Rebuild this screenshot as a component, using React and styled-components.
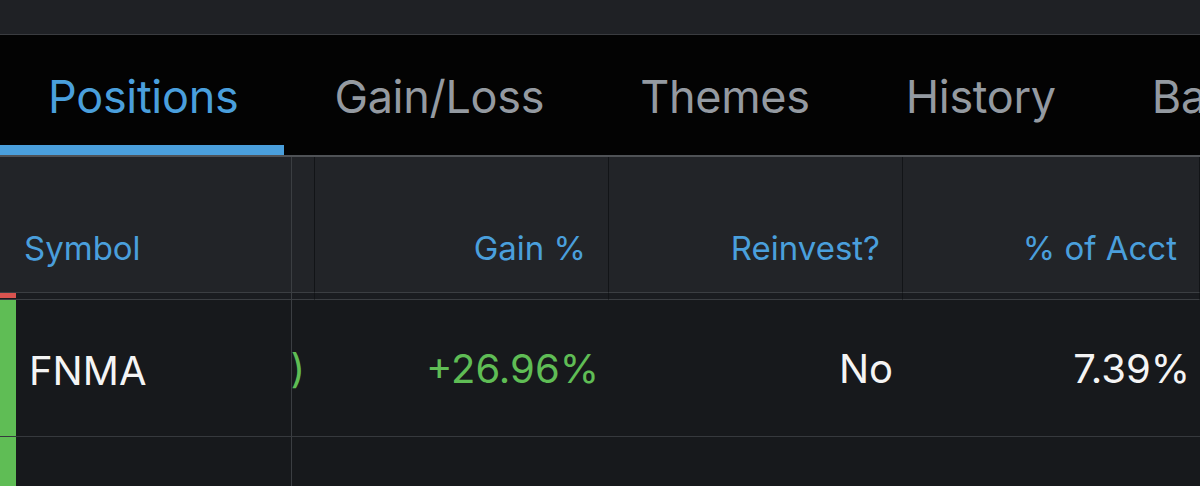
import React from 'react';
import styled, { createGlobalStyle } from 'styled-components';

const GlobalStyle = createGlobalStyle`
    html, body {
        margin: 0;
        padding: 0;
        background: #17191c;
        font-family: Inter, "Noto Sans", sans-serif;
        overflow: hidden;
    }
`

const Page = styled.div`
    width: 1200px;
    height: 486px;
    overflow: hidden;
    background: #17191c;
`

const TopBar = styled.div`
    height: 34px;
    background: #1f2125;
    border-bottom: 1px solid #3a3c40;
`

const TabBar = styled.div`
    display: flex;
    height: 120px;
    background: #030303;
    border-bottom: 2px solid #4f5256;
    white-space: nowrap;
`

const Tab = styled.div`
    position: relative;
    flex-shrink: 0;
    display: flex;
    align-items: center;
    padding: 2px 48px 0;
    font-size: 45px;
    letter-spacing: -0.3px;
    color: ${p => (p.$active ? '#4a9fdc' : '#949aa1')};
    &::after {
        content: '';
        display: ${p => (p.$active ? 'block' : 'none')};
        position: absolute;
        left: 0;
        right: 2px;
        bottom: 0;
        height: 10px;
        background: #4a9fdc;
    }
`

const Grid = styled.div`
    display: grid;
    grid-template-columns: 292px 23px 294px 294px 1fr;
`

const HeadCell = styled.div`
    height: 136px;
    box-sizing: border-box;
    display: flex;
    align-items: flex-end;
    justify-content: ${p => (p.$left ? 'flex-start' : 'flex-end')};
    padding: 0 22px 24px ${p => (p.$left ? '24px' : '0')};
    background: #222428;
    border-bottom: 1px solid #3b3e42;
    border-right: 1px solid ${p => (p.$frozen ? '#3b3e42' : '#121417')};
    font-size: 33px;
    color: #4a9fdc;
    white-space: nowrap;
`

const GapCell = styled.div`
    height: 6px;
    background: #1a1c20;
    border-bottom: 1px solid #3b3e42;
    border-right: 1px solid ${p => (p.$frozen ? '#3b3e42' : '#121417')};
    display: flex;
`

const Marker = styled.div`
    width: 16px;
    height: ${p => p.$h || '100%'};
    background: ${p => p.$color};
    flex-shrink: 0;
`

const Cell = styled.div`
    height: 137px;
    box-sizing: border-box;
    display: flex;
    align-items: center;
    justify-content: ${p => (p.$left ? 'flex-start' : 'flex-end')};
    padding-right: ${p => (p.$left ? '0' : '10px')};
    background: #17191c;
    border-bottom: 1px solid #36393d;
    border-right: ${p => (p.$frozen ? '1px solid #3b3e42' : 'none')};
    font-size: 40px;
    color: ${p => p.$color || '#f4f4f4'};
    white-space: nowrap;
    overflow: hidden;
`

const Symbol = styled.span`
    padding-left: 13px;
    padding-top: 4px;
`

const tabs = ['Positions', 'Gain/Loss', 'Themes', 'History', 'Balances'];

const App = () => {
    return (
        <Page>
            <GlobalStyle />
            <TopBar />
            <TabBar>
                {tabs.map((t, i) => (
                    <Tab key={t} $active={i === 0}>{t}</Tab>
                ))}
            </TabBar>
            <Grid>
                <HeadCell $left $frozen>Symbol</HeadCell>
                <HeadCell />
                <HeadCell>Gain %</HeadCell>
                <HeadCell>Reinvest?</HeadCell>
                <HeadCell>% of Acct</HeadCell>

                <GapCell $frozen><Marker $color="#d9534f" $h="5px" /></GapCell>
                <GapCell />
                <GapCell />
                <GapCell />
                <GapCell />

                <Cell $left $frozen><Marker $color="#5fbd55" /><Symbol>FNMA</Symbol></Cell>
                <Cell $color="#5fbd55">)</Cell>
                <Cell $color="#5fbd55">+26.96%</Cell>
                <Cell>No</Cell>
                <Cell>7.39%</Cell>

                <Cell $left $frozen><Marker $color="#5fbd55" /></Cell>
                <Cell />
                <Cell />
                <Cell />
                <Cell />
            </Grid>
        </Page>
    );
}

export default App;
